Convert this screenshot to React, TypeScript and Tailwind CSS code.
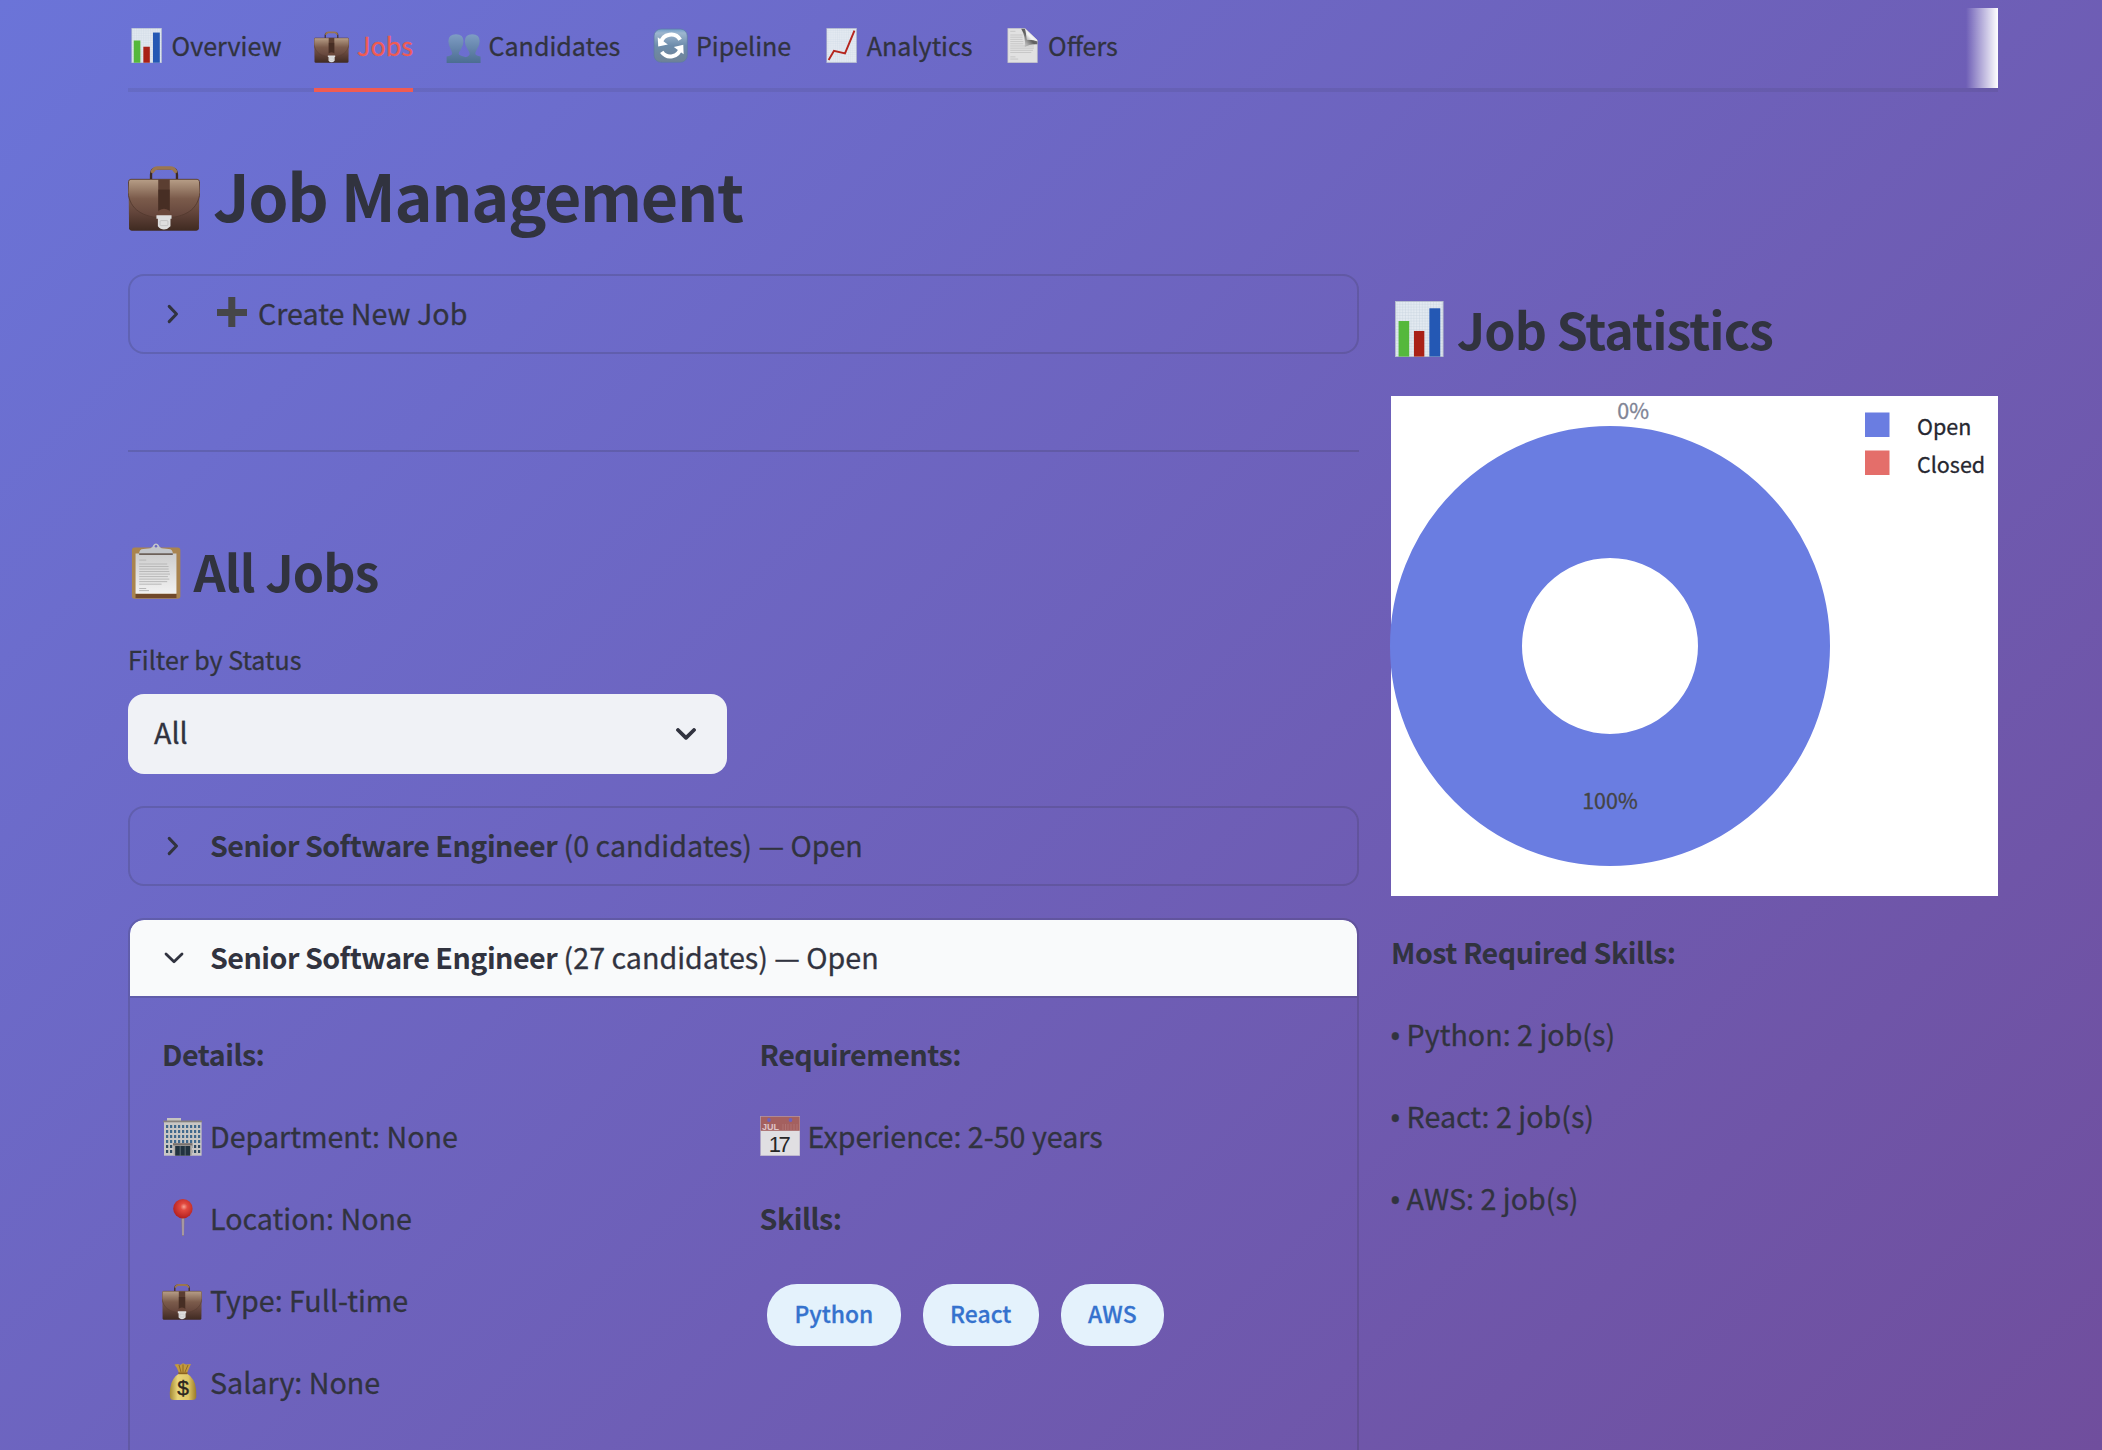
import type { ReactNode } from "react";

type IconProps = { className: string };

function BarChartIcon({ className }: IconProps) {
  return (
    <svg viewBox="0 0 40 40" className={className}>
      <defs>
        <pattern id="bar-grid" width="2" height="2" patternUnits="userSpaceOnUse">
          <rect width="2" height="2" fill="#e3eaf1" />
          <path d="M0 0H2M0 0V2" stroke="#c3d0dc" strokeWidth="0.5" />
        </pattern>
      </defs>
      <rect x="3.2" y="0.2" width="34" height="39.6" fill="url(#bar-grid)" stroke="#b4bdc9" strokeWidth="0.6" />
      <rect x="5.4" y="14.3" width="7.6" height="25.4" fill="#55b83c" />
      <rect x="16.4" y="21.4" width="7.4" height="18.3" fill="#a92117" />
      <rect x="27.4" y="5.2" width="7.8" height="34.5" fill="#2458b4" />
    </svg>
  );
}

function BriefcaseIcon({ className }: IconProps) {
  return (
    <svg viewBox="0 0 40 40" className={className}>
      <defs>
        <linearGradient id="case-body" x1="0" y1="0" x2="0" y2="1">
          <stop offset="0" stopColor="#a98f79" />
          <stop offset="0.3" stopColor="#7d6050" />
          <stop offset="0.65" stopColor="#62443a" />
          <stop offset="1" stopColor="#3f2a21" />
        </linearGradient>
        <linearGradient id="case-flap" x1="0" y1="0" x2="0" y2="1">
          <stop offset="0" stopColor="#b79e87" />
          <stop offset="0.5" stopColor="#7b5b4b" />
          <stop offset="1" stopColor="#62433a" />
        </linearGradient>
      </defs>
      <path d="M12.8 11.5V8.6Q12.8 5.2 16 5.2H24Q27.2 5.2 27.2 8.6V11.5" fill="none" stroke="#3d2a23" strokeWidth="1.3" />
      <path d="M13.6 6.9Q14.6 5 16.5 5H23.5Q25.4 5 26.4 6.9" fill="none" stroke="#9a7650" strokeWidth="2" strokeLinecap="round" />
      <path d="M1.6 11.3H38.4Q39.6 11.3 39.7 12.6L39.4 38.6Q39.3 39.8 38 39.8H2Q0.7 39.8 0.6 38.6L0.3 12.6Q0.4 11.3 1.6 11.3Z" fill="url(#case-body)" />
      <path d="M1.6 11.3H38.4Q39.6 11.3 39.7 12.6L40 18.5C39 28 32 32.5 20 32.8C8 32.5 1 28 0 18.5L0.3 12.6Q0.4 11.3 1.6 11.3Z" fill="url(#case-flap)" stroke="#543a2f" strokeWidth="0.5" />
      <path d="M16.8 11.3H23.2V29H16.8Z" fill="#5b3e31" />
      <path d="M16.8 17H23.2V29H16.8Z" fill="#3a251d" opacity="0.6" />
      <path d="M15.8 31.5V31Q17 27.6 20 27.6Q23 27.6 24.2 31V31.5Z" fill="#6a473a" />
      <path d="M15.8 31.3H24.2V33.2H23.6V37.4Q22 39.2 20 39.2Q18 39.2 16.6 37.4V33.2H15.8Z" fill="#dedede" />
      <rect x="17.8" y="34.2" width="4.4" height="2.8" rx="0.6" fill="none" stroke="#b9b9b9" strokeWidth="0.4" />
    </svg>
  );
}

function PeopleIcon({ className }: IconProps) {
  return (
    <svg viewBox="0 0 40 40" className={className}>
      <defs>
        <linearGradient id="people-fill" x1="0" y1="7" x2="0" y2="40" gradientUnits="userSpaceOnUse">
          <stop offset="0" stopColor="#7f9dc4" />
          <stop offset="1" stopColor="#4b6d92" />
        </linearGradient>
      </defs>
      <path
        d="M20.5 40V34C24 33 27 32 27 29.5Q27 27.5 24.8 24.5Q21.5 19.5 21.5 15Q21.5 7 30 7Q38.5 7 38.5 15Q38.5 19.5 35.2 24.5Q33.5 27.5 33.5 29.5Q33.5 31.5 39.5 32.5V40Z"
        fill="url(#people-fill)"
      />
      <path
        d="M0.7 40V32.5Q7 31.5 7 29.5Q7 27.5 5.5 24.5Q2.7 19.5 2.7 15Q2.7 7 11.5 7Q20 7 20 15Q20 19.5 17 24.5Q14.5 27.5 14.5 29.5Q14.5 31.5 21 32.8Q25 33.8 25.6 40Z"
        fill="url(#people-fill)"
      />
    </svg>
  );
}

function RefreshIcon({ className }: IconProps) {
  return (
    <svg viewBox="0 0 40 40" className={className}>
      <defs>
        <linearGradient id="refresh-fill" x1="0" y1="0" x2="0" y2="1">
          <stop offset="0" stopColor="#6f9cc8" />
          <stop offset="0.12" stopColor="#9db6cf" />
          <stop offset="0.5" stopColor="#6d8cab" />
          <stop offset="1" stopColor="#6f8296" />
        </linearGradient>
      </defs>
      <rect x="1.2" y="1.2" width="38" height="38" rx="8" fill="url(#refresh-fill)" stroke="#5c7ba4" strokeWidth="0.8" />
      <path d="M9 17A12 12 0 0 1 31 13.4" fill="none" stroke="#fff" strokeWidth="4.6" />
      <path d="M31.6 23A12 12 0 0 1 10 27.2" fill="none" stroke="#fff" strokeWidth="4.6" />
      <path d="M5.4 10.5L6 21.2L17 18.8Z" fill="#fff" />
      <path d="M35 30L34.6 19L23.8 21.6Z" fill="#fff" />
    </svg>
  );
}

function TrendIcon({ className }: IconProps) {
  return (
    <svg viewBox="0 0 40 40" className={className}>
      <defs>
        <pattern id="trend-grid" width="2.5" height="2.5" patternUnits="userSpaceOnUse">
          <rect width="2.5" height="2.5" fill="#e3e9f1" />
          <path d="M0 0H2.5M0 0V2.5" stroke="#cbd6e2" strokeWidth="0.5" />
        </pattern>
      </defs>
      <rect x="3.2" y="0.3" width="34" height="39.4" fill="url(#trend-grid)" stroke="#aeb5c6" strokeWidth="0.7" />
      <path d="M5.3 36.6L11.4 26L24 29L34.8 3" fill="none" stroke="#b5261f" strokeWidth="2.2" />
    </svg>
  );
}

function PageIcon({ className }: IconProps) {
  return (
    <svg viewBox="0 0 40 40" className={className}>
      <defs>
        <linearGradient id="page-curl" x1="0" y1="1" x2="1" y2="0">
          <stop offset="0" stopColor="#8d8d8d" />
          <stop offset="0.4" stopColor="#f6f6f6" />
          <stop offset="1" stopColor="#c8c8c8" />
        </linearGradient>
        <linearGradient id="page-shade" x1="1" y1="0" x2="0" y2="1">
          <stop offset="0" stopColor="#8a8a8a" />
          <stop offset="0.5" stopColor="#5e5e5e" />
          <stop offset="1" stopColor="#9a9a9a" stopOpacity="0" />
        </linearGradient>
      </defs>
      <path d="M3.2 0.3H22.5L37 14V39.7H3.2Z" fill="#e1e1e1" stroke="#bdbdbd" strokeWidth="0.6" />
      <path d="M6 3.8H12M6 8H20M6 10.5H20M6 13H20M6 15.5H21M6 18H21M6 20.5H33M6 23H33M6 25.5H32M6 28H30M6 33H12M6 35.5H15" stroke="#c4c4c4" strokeWidth="1" />
      <path d="M18.5 0.8H23L25 13L37 14.5V18.5Q28 18 22.5 22Q24 10 18.5 0.8Z" fill="url(#page-shade)" />
      <path d="M22.5 0.3Q26 5.5 25 13.5Q31 12 37 15.5L36.5 13.5Z" fill="url(#page-curl)" />
    </svg>
  );
}

function ClipboardIcon({ className }: IconProps) {
  return (
    <svg viewBox="0 0 40 40" className={className}>
      <defs>
        <linearGradient id="clip-paper" x1="0" y1="0" x2="0" y2="1">
          <stop offset="0" stopColor="#cdcdcd" />
          <stop offset="1" stopColor="#f2f2f2" />
        </linearGradient>
      </defs>
      <rect x="2.8" y="3.2" width="34.6" height="36.7" rx="1.8" fill="#a9844f" />
      <rect x="5.4" y="36.3" width="29.2" height="3" fill="#70492a" />
      <rect x="5.4" y="7.5" width="29.2" height="28.7" fill="url(#clip-paper)" />
      <path d="M8 12.2H13M8 15H28M8 16.8H29M8 18.6H29M8 20.4H29.5M8 22.2H30M8 24H28.5M8 25.8H29.5M8 27.6H28M8 29.4H24M8 32.5H13M8 34H15" stroke="#b6b6b6" strokeWidth="0.7" />
      <path d="M7.9 7.8Q7.9 4.3 11 4.2L16 3.8Q17.5 3.5 18 1.6Q18.7 0.3 20 0.3Q21.3 0.3 22 1.6Q22.5 3.5 24 3.8L29 4.2Q32 4.3 32.1 7.8Z" fill="#c3c6ca" />
      <path d="M8 7.9H32" stroke="#6d6159" strokeWidth="1.3" />
      <circle cx="20" cy="2.4" r="0.9" fill="#6c68bf" />
    </svg>
  );
}

function PlusIcon({ className }: IconProps) {
  return (
    <svg viewBox="0 0 40 40" className={className}>
      <path d="M7 19.5H37M21.8 4V34" stroke="#464649" strokeWidth="7" />
    </svg>
  );
}

function OfficeIcon({ className }: IconProps) {
  const rows = [9, 14, 19, 24, 29, 34];
  const cols = [4, 8, 12, 16, 20, 24, 28, 32, 36];
  return (
    <svg viewBox="0 0 40 40" className={className}>
      <rect x="5" y="2" width="14" height="3" fill="#c6c4c0" />
      <rect x="2" y="5" width="37.6" height="34.7" fill="#c9c7c4" />
      <rect x="1.3" y="4.5" width="38.7" height="1.8" fill="#86817d" />
      {rows.map((y) =>
        cols.map((x) => <rect key={`${x}-${y}`} x={x} y={y} width="2.2" height="3" fill={y > 28 ? "#2f4a63" : "#41698c"} />),
      )}
      <rect x="11.5" y="28" width="18.5" height="11.7" fill="#b0aca8" />
      <rect x="11" y="27.2" width="19.5" height="2.2" fill="#77716d" />
      <rect x="13.2" y="30" width="15" height="9.7" fill="#22333f" />
      <path d="M18.2 30V39.7M23.2 30V39.7" stroke="#7a8790" strokeWidth="0.7" />
    </svg>
  );
}

function PinIcon({ className }: IconProps) {
  return (
    <svg viewBox="0 0 40 40" className={className}>
      <defs>
        <radialGradient id="pin-head" cx="0.55" cy="0.4" r="0.6">
          <stop offset="0" stopColor="#f6a394" />
          <stop offset="0.3" stopColor="#e2493f" />
          <stop offset="1" stopColor="#b3201f" />
        </radialGradient>
      </defs>
      <path d="M19.2 19H22.6L22 37.5Q20.9 38.5 20 37.5Z" fill="#8d7b82" />
      <path d="M21 20V37" stroke="#c7bcc2" strokeWidth="0.9" />
      <circle cx="20.9" cy="10.7" r="9.7" fill="url(#pin-head)" />
    </svg>
  );
}

function MoneyBagIcon({ className }: IconProps) {
  return (
    <svg viewBox="0 0 40 40" className={className}>
      <defs>
        <linearGradient id="bag-fill" x1="0" y1="0" x2="1" y2="0">
          <stop offset="0" stopColor="#a58a35" />
          <stop offset="0.3" stopColor="#e9d57a" />
          <stop offset="0.7" stopColor="#e0c765" />
          <stop offset="1" stopColor="#9a7a28" />
        </linearGradient>
      </defs>
      <path d="M12.5 2.5L16 2L18 3L21 1.3L24 2.5L29 2Q27 6 25 11H17Q15.5 6 12.5 2.5Z" fill="#c49a3e" />
      <path d="M17 3L19 10M21 2.5V10M26 3L23 10" stroke="#8a6420" strokeWidth="0.9" />
      <path d="M17 11.5H25Q33 16.5 34 27Q34.5 33 34.2 35.5Q33.5 38 30 38H12Q8.5 38 8 35.5Q7.5 31 8.2 26Q9.5 16 17 11.5Z" fill="url(#bag-fill)" />
      <path d="M16.3 11.3H25.5" stroke="#8c6320" strokeWidth="1.8" />
      <text x="21.2" y="33" textAnchor="middle" fontSize="21" fill="#2c2620" stroke="#2c2620" strokeWidth="0.4" fontFamily="Liberation Sans, sans-serif">$</text>
    </svg>
  );
}

function CalendarIcon({ className }: IconProps) {
  return (
    <svg viewBox="0 0 40 40" className={className}>
      <rect x="0.5" y="0.3" width="39.4" height="39.5" fill="#e0dfe2" stroke="#b3a9c4" strokeWidth="0.5" />
      <rect x="0.7" y="0.5" width="39" height="14.3" fill="#a4605f" />
      <circle cx="9" cy="4" r="1.9" fill="#6c5fc0" />
      <circle cx="30.5" cy="4" r="1.9" fill="#6c5fc0" />
      <path d="M23 8V14M25.5 8V14M28 8V14M31 8V14M34 8V14M37 8V14" stroke="#b17574" strokeWidth="0.9" />
      <text x="2" y="13.6" fontSize="9" fontWeight="700" fill="#dfc5c8" fontFamily="Liberation Sans, sans-serif">JUL</text>
      <text x="19.8" y="35.6" textAnchor="middle" fontSize="22" fill="#272727" fontFamily="Liberation Sans, sans-serif" textLength="22" lengthAdjust="spacing">17</text>
    </svg>
  );
}

function ChevronRight() {
  return (
    <svg viewBox="0 0 12 20" className="mt-[3px] h-5 w-3 shrink-0">
      <path d="M2.2 2.4L9.5 10L2.2 17.6" fill="none" stroke="#31333f" strokeWidth="3" strokeLinecap="round" strokeLinejoin="round" />
    </svg>
  );
}

function Tab({ icon, label, active }: { icon: ReactNode; label: string; active?: boolean }) {
  return (
    <button className={active ? "relative flex h-20 items-center pb-1.5 text-[#f05b52]" : "relative flex h-20 items-center pb-1.5"}>
      {icon}
      <span className="ml-[7.7px] text-[25.07px] leading-9 whitespace-nowrap">{label}</span>
      {active && <span className="absolute inset-x-0 -bottom-1 h-1 bg-[#f05b52]" />}
    </button>
  );
}

function Line({ icon, children, bold }: { icon?: ReactNode; children: ReactNode; bold?: boolean }) {
  return (
    <p
      className={
        bold
          ? "flex h-[52px] items-center font-bold tracking-[-0.017em] whitespace-nowrap [-webkit-text-stroke:0]"
          : "flex h-[52px] items-center whitespace-nowrap"
      }
    >
      {icon}
      <span className={icon ? "ml-2" : ""}>{children}</span>
    </p>
  );
}

function SkillCount({ children }: { children: ReactNode }) {
  return (
    <p className="flex h-[52px] items-center whitespace-nowrap">
      <span className="w-[15.6px] pt-[3px] font-['Noto_Sans',sans-serif] text-[31px] -indent-[1.5px]">•</span>
      <span>{children}</span>
    </p>
  );
}

function Pill({ children }: { children: ReactNode }) {
  return (
    <span className="flex h-[62px] items-center rounded-[30px] bg-[#e4f2fc] px-[27.4px] pb-1 text-[22.9px] font-medium text-[#3572ce]">
      {children}
    </span>
  );
}

function StatusChart() {
  return (
    <div className="mt-[34px] h-[500px] w-[607px] bg-white">
      <svg viewBox="0 0 607 500" className="h-[500px] w-[607px] overflow-visible text-[21.5px]">
        <circle cx="219" cy="250" r="154" fill="none" stroke="#6a7de1" strokeWidth="132" />
        <text x="242.2" y="22.7" textAnchor="middle" fill="#808495" stroke="#808495" strokeWidth="0.3">0%</text>
        <text x="219" y="413" textAnchor="middle" fill="#444" stroke="#444" strokeWidth="0.3">100%</text>
        <rect x="474" y="16.5" width="24.5" height="24.5" fill="#6a7de1" />
        <rect x="474" y="54.5" width="24.5" height="24.5" fill="#e46e6a" />
        <text x="526" y="39" fill="#262730" stroke="#262730" strokeWidth="0.3">Open</text>
        <text x="526" y="76.7" fill="#262730" stroke="#262730" strokeWidth="0.3">Closed</text>
      </svg>
    </div>
  );
}

const small = "mt-px ml-[0.9px] h-[35px] w-[35px] shrink-0";
const medium = "h-10 w-10 shrink-0";
const large = "mt-0.5 h-14 w-14 shrink-0";

function JobTitle() {
  return <b className="tracking-[-0.018em] [-webkit-text-stroke:0]">Senior Software Engineer</b>;
}

export default function App() {
  return (
    <div className="h-[1450px] w-[2102px] overflow-hidden bg-[linear-gradient(135deg,#6b74d8_0%,#704e9d_100%)] font-['Noto_Sans_CJK_SC','Noto_Sans',sans-serif] text-[28.66px] leading-[52px] text-[#31333f] [-webkit-text-stroke:0.3px]">
      <div className="ml-32 w-[1870px] pt-2">
        <nav className="relative flex h-[84px] gap-8 border-b-4 border-[#31333f]/10">
          <Tab icon={<BarChartIcon className={small} />} label="Overview" />
          <Tab icon={<BriefcaseIcon className={small} />} label="Jobs" active />
          <Tab icon={<PeopleIcon className={small} />} label="Candidates" />
          <Tab icon={<RefreshIcon className={small} />} label="Pipeline" />
          <Tab icon={<TrendIcon className={small} />} label="Analytics" />
          <Tab icon={<PageIcon className={small} />} label="Offers" />
          <div className="absolute top-0 right-0 h-20 w-8 bg-linear-to-r from-white/0 to-white" />
        </nav>

        <h1 className="mt-[59px] flex h-[86px] items-center text-[64.5px] font-bold tracking-[-0.021em] whitespace-nowrap [-webkit-text-stroke:0]">
          <BriefcaseIcon className="mt-0.5 h-[72px] w-[72px] shrink-0" />
          <span className="ml-[13px]">Job Management</span>
        </h1>

        <div className="mt-[37px] flex gap-8">
          <main className="w-[1231px] shrink-0">
            <section className="flex h-20 items-center rounded-2xl border-2 border-[#31333f]/20 pb-[3px] pl-[37px]">
              <ChevronRight />
              <PlusIcon className="ml-[31px] h-10 w-10 shrink-0" />
              <span className="ml-2">Create New Job</span>
            </section>

            <hr className="mt-24 border-t-2 border-[#31333f]/20" />

            <h2 className="mt-[84px] flex h-[68px] items-center text-[50.15px] font-bold tracking-[-0.017em] [-webkit-text-stroke:0]">
              <ClipboardIcon className={large} />
              <span className="ml-[9.5px]">All Jobs</span>
            </h2>

            <label className="mt-[38px] block h-[34px] text-[25.07px] leading-[34px]">Filter by Status</label>
            <div className="mt-[18px] flex h-20 w-[599px] items-center justify-between rounded-2xl bg-[#f0f2f6] pr-[31px] pb-[5px] pl-[26px]">
              <span>All</span>
              <svg viewBox="0 0 20 12" className="mt-1 h-3 w-5">
                <path d="M2 2L10 9.8L18 2" fill="none" stroke="#31333f" strokeWidth="3.8" strokeLinecap="round" strokeLinejoin="round" />
              </svg>
            </div>

            <section className="mt-8 flex h-20 items-center rounded-2xl border-2 border-[#31333f]/20 pb-[3px] pl-[37px]">
              <ChevronRight />
              <span className="ml-[31px]">
                <JobTitle /> (0 candidates) — Open
              </span>
            </section>

            <section className="mt-8 h-[600px] rounded-2xl border-2 border-[#31333f]/20">
              <div className="flex h-[78px] items-center rounded-t-[14px] border-b-2 border-[#31333f]/20 bg-[#f9fafb] bg-clip-padding pb-[3px] pl-[34px]">
                <svg viewBox="0 0 20 12" className="mt-[3px] h-3 w-5 shrink-0">
                  <path d="M2 2L10 9.7L18 2" fill="none" stroke="#31333f" strokeWidth="2.8" strokeLinecap="round" strokeLinejoin="round" />
                </svg>
                <span className="ml-[26px]">
                  <JobTitle /> (27 candidates) — Open
                </span>
              </div>
              <div className="flex gap-8 px-8 pt-[30px]">
                <div className="flex flex-1 flex-col gap-[30px]">
                  <Line bold>Details:</Line>
                  <Line icon={<OfficeIcon className={medium} />}>Department: None</Line>
                  <Line icon={<PinIcon className={medium} />}>Location: None</Line>
                  <Line icon={<BriefcaseIcon className={medium} />}>Type: Full-time</Line>
                  <Line icon={<MoneyBagIcon className={medium} />}>Salary: None</Line>
                </div>
                <div className="flex flex-1 flex-col gap-[30px]">
                  <Line bold>Requirements:</Line>
                  <Line icon={<CalendarIcon className={medium} />}>Experience: 2-50 years</Line>
                  <Line bold>Skills:</Line>
                  <div className="mt-2.5 ml-[7.5px] flex gap-[22px]">
                    <Pill>Python</Pill>
                    <Pill>React</Pill>
                    <Pill>AWS</Pill>
                  </div>
                </div>
              </div>
            </section>
          </main>

          <aside className="w-[607px] shrink-0 pt-5">
            <h2 className="flex h-[68px] items-center text-[50.15px] font-bold tracking-[-0.019em] whitespace-nowrap [-webkit-text-stroke:0]">
              <BarChartIcon className={large} />
              <span className="ml-[9.8px]">Job Statistics</span>
            </h2>
            <StatusChart />
            <div className="mt-[30px] flex flex-col gap-[30px]">
              <Line bold>Most Required Skills:</Line>
              <SkillCount>Python: 2 job(s)</SkillCount>
              <SkillCount>React: 2 job(s)</SkillCount>
              <SkillCount>AWS: 2 job(s)</SkillCount>
            </div>
          </aside>
        </div>
      </div>
    </div>
  );
}
